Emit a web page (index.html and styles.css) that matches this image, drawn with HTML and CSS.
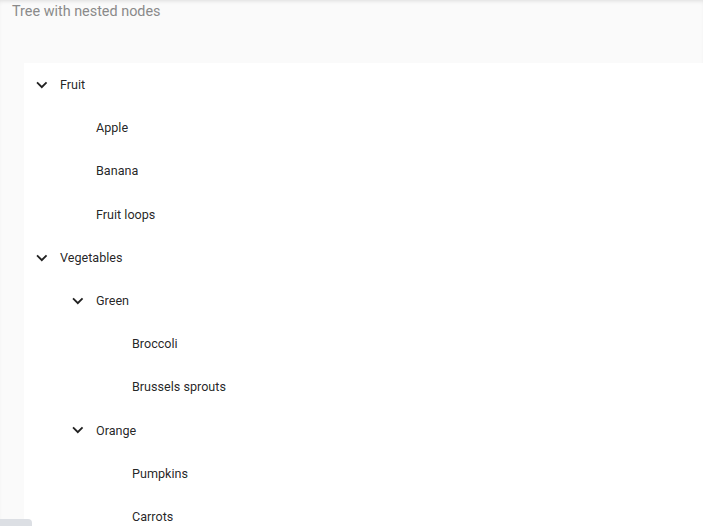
FILE: index.html
```html
<!DOCTYPE html>
<html>
<head>
<meta charset="utf-8">
<link rel="stylesheet" href="styles.css">
</head>
<body>
<div class="page">
  <div class="title">Tree with nested nodes</div>
  <div class="tree">
    <div class="node"><span class="toggle"><svg viewBox="0 0 24 24"><path d="M16.59 8.59L12 13.17 7.41 8.59 6 10l6 6 6-6z"/></svg></span><span class="label">Fruit</span></div>
    <div class="group">
      <div class="node"><span class="spacer"></span><span class="label">Apple</span></div>
      <div class="node"><span class="spacer"></span><span class="label">Banana</span></div>
      <div class="node"><span class="spacer"></span><span class="label">Fruit loops</span></div>
    </div>
    <div class="node"><span class="toggle"><svg viewBox="0 0 24 24"><path d="M16.59 8.59L12 13.17 7.41 8.59 6 10l6 6 6-6z"/></svg></span><span class="label">Vegetables</span></div>
    <div class="group">
      <div class="node"><span class="toggle"><svg viewBox="0 0 24 24"><path d="M16.59 8.59L12 13.17 7.41 8.59 6 10l6 6 6-6z"/></svg></span><span class="label">Green</span></div>
      <div class="group">
        <div class="node"><span class="spacer"></span><span class="label">Broccoli</span></div>
        <div class="node"><span class="spacer"></span><span class="label">Brussels sprouts</span></div>
      </div>
      <div class="node"><span class="toggle"><svg viewBox="0 0 24 24"><path d="M16.59 8.59L12 13.17 7.41 8.59 6 10l6 6 6-6z"/></svg></span><span class="label">Orange</span></div>
      <div class="group">
        <div class="node"><span class="spacer"></span><span class="label">Pumpkins</span></div>
        <div class="node"><span class="spacer"></span><span class="label">Carrots</span></div>
      </div>
    </div>
  </div>
  <div class="scrollthumb"></div>
</div>
</body>
</html>
```

FILE: styles.css
```css
html, body {
  margin: 0;
  padding: 0;
  height: 100%;
  overflow: hidden;
}
body {
  background: #fafafa;
  font-family: Roboto, "Liberation Sans", sans-serif;
}
.page {
  position: relative;
  height: 100%;
  box-shadow: inset 0 3px 4px -2px rgba(0,0,0,0.12);
}
.title {
  height: 63px;
  box-sizing: border-box;
  padding: 2px 12px 0;
  font-size: 14.4px;
  line-height: 20px;
  color: #8a8a8a;
}
.tree {
  margin-left: 24px;
  background: #fff;
  min-height: 480px;
}
.group {
  padding-left: 36px;
}
.node {
  display: flex;
  align-items: center;
  height: 43.2px;
  font-size: 12.6px;
  color: rgba(0,0,0,0.87);
}
.toggle, .spacer {
  width: 36px;
  height: 36px;
  flex: none;
  display: flex;
  align-items: center;
  justify-content: center;
}
.toggle svg {
  width: 21.6px;
  height: 21.6px;
  fill: rgba(0,0,0,0.87);
}
.scrollthumb {
  position: absolute;
  left: 0;
  bottom: 0;
  width: 32px;
  height: 7px;
  background: #dcdfe4;
  border-top-right-radius: 4px;
}
```
